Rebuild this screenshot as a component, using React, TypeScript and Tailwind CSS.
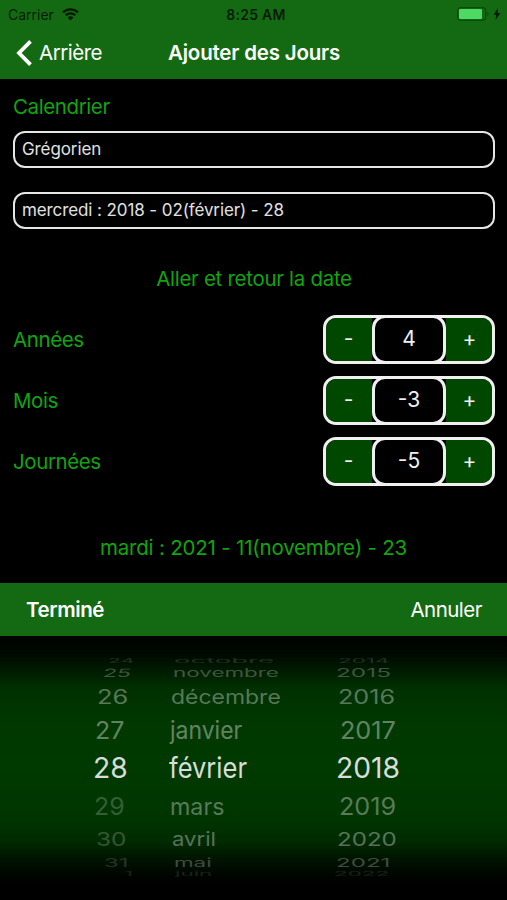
import { useState } from "react"
import clsx from "clsx"

const rows = [
  { h: "h-3", tone: "text-white/15", cells: [["24", "ml-[108px] scale-x-[.76] scale-y-[.22]"], ["octobre", "ml-[174px] scale-x-[.98] scale-y-[.22]"], ["2014", "ml-[338px] scale-x-[.8] scale-y-[.22]"]] },
  { h: "h-3", tone: "text-white/25", cells: [["25", "ml-[103px] scale-x-[.82] scale-y-[.41] -skew-x-6"], ["novembre", "ml-[173px] scale-x-[.8] scale-y-[.41]"], ["2015", "ml-[336px] scale-x-[.87] scale-y-[.41]"]] },
  { h: "h-9", tone: "text-white/35", cells: [["26", "ml-[97px] scale-x-[.91] scale-y-[.7]"], ["décembre", "ml-[171px] scale-x-[.82] scale-y-[.7]"], ["2016", "ml-[338px] scale-x-[.9] scale-y-[.7]"]] },
  { h: "h-[30px]", tone: "text-white/40", cells: [["27", "ml-[95px] scale-x-[.89] scale-y-[.87]"], ["janvier", "ml-[170px] scale-x-[.82] scale-y-[.87]"], ["2017", "ml-[340px] scale-x-[.9] scale-y-[.87]"]] },
  { h: "h-[46px]", tone: "text-[#d9ddd9]", cells: [["28", "ml-[93px] scale-x-[1.01]"], ["février", "ml-[169px] scale-x-[.91]"], ["2018", "ml-[336px] scale-x-[1.01]"]] },
  { h: "h-8", tone: "text-white/35", cells: [["29", "ml-[94px] scale-x-[.89] scale-y-[.85] opacity-60"], ["mars", "ml-[170px] scale-x-[.83] scale-y-[.85]"], ["2019", "ml-[339px] scale-x-[.9] scale-y-[.85]"]] },
  { h: "h-8", tone: "text-white/35", cells: [["30", "ml-[96px] scale-x-[.87] scale-y-[.68] opacity-60"], ["avril", "ml-[172px] scale-x-[.79] scale-y-[.68]"], ["2020", "ml-[337px] scale-x-[.86] scale-y-[.68]"]] },
  { h: "h-4", tone: "text-white/25", cells: [["31", "ml-[104px] scale-x-[.85] scale-y-[.44] opacity-60"], ["mai", "ml-[174px] scale-x-[.8] scale-y-[.44]"], ["2021", "ml-[336px] scale-x-[.86] scale-y-[.44]"]] },
  { h: "h-1.5", tone: "text-white/10", cells: [["1", "ml-[124px] scale-x-[.8] scale-y-[.2]"], ["juin", "ml-[175px] scale-x-[.8] scale-y-[.2]"], ["2022", "ml-[334px] scale-x-[.8] scale-y-[.2]"]] },
]

function Field({ children }: { children: string }) {
  return (
    <div className="-mr-px h-[37px] rounded-[12px] border-2 border-[#e6e6e6] px-[7px] text-[17px] leading-[33px] tracking-[-0.1px] text-[#e0e0e0]">
      {children}
    </div>
  )
}

function Stepper({ label, initial }: { label: string; initial: number }) {
  const [value, setValue] = useState(initial)

  return (
    <div className="-mr-px flex h-[49px] items-center justify-between">
      <span className="pt-0.5 text-[20.5px] tracking-[-0.4px] text-[#10a510]">{label}</span>
      <div className="flex h-[49px] w-[172px] overflow-hidden rounded-[13px] border-[3px] border-[#f0f0f0] text-[21px] text-[#f0f0f0]">
        <button className="w-[46px] bg-[#004800] pr-px pb-0.5" onClick={() => setValue(value - 1)}>-</button>
        <div className="-my-[3px] w-[74px] bg-black">
          <div className="h-full rounded-[13px] border-[3px] border-[#f0f0f0] text-center leading-[42px]">{value}</div>
        </div>
        <button className="w-[46px] bg-[#004800] pb-0.5 pl-px" onClick={() => setValue(value + 1)}>+</button>
      </div>
    </div>
  )
}

export default function App() {
  return (
    <div className="h-[900px] w-[507px] overflow-hidden bg-black font-['Inter',sans-serif]">
      {/* Header */}
      <header className="h-[79px] bg-[#146a12]">
        <div className="grid h-7 grid-cols-3 items-center pr-1.5 pl-2 text-[14px] text-black/75">
          <div className="flex items-center gap-2">
            <span>Carrier</span>
            <svg width="17" height="13" viewBox="0 0 17 13" fill="none" stroke="#021a02" strokeWidth="2.3">
              <path d="M1 4.4a10.7 10.7 0 0 1 15 0M3.7 7.3a6.8 6.8 0 0 1 9.6 0" />
              <path d="M8.5 12.5 5.6 9.6a4.1 4.1 0 0 1 5.8 0z" fill="#021a02" stroke="none" />
            </svg>
          </div>
          <span className="pl-[3px] text-center font-semibold tracking-[0.3px]">8:25 AM</span>
          <div className="flex items-center justify-end gap-1">
            <svg width="32" height="14" viewBox="0 0 32 14">
              <rect x="0.7" y="0.7" width="28" height="12.6" rx="3" fill="none" stroke="#0c4a0b" strokeWidth="1.2" />
              <rect x="2" y="2" width="23" height="10" rx="1.2" fill="#4cd964" />
              <path d="M30.3 5v4q1.4-.7 1.4-2t-1.4-2" fill="#0c4a0b" />
            </svg>
            <svg width="8" height="12" viewBox="0 0 8 12" fill="#021a02">
              <path d="M5 0 .6 6.7h2.7L2.5 12l4.9-7H4.6z" />
            </svg>
          </div>
        </div>
        <div className="grid h-[50px] grid-cols-[1fr_auto_1fr] items-center text-[20.5px] text-white">
          <button className="flex items-center gap-[7px] pl-4">
            <svg width="16" height="26" viewBox="0 0 16 26" fill="none" stroke="white" strokeWidth="3.8">
              <path d="M14.5 1.4 3 13l11.5 11.6" />
            </svg>
            <span className="tracking-[-0.5px]">Arrière</span>
          </button>
          <h1 className="pl-px font-semibold tracking-[-0.2px]">Ajouter des Jours</h1>
        </div>
      </header>

      {/* Form */}
      <main className="h-[504px] px-[13px] pt-3">
        <div className="h-[40px] text-[20.5px] leading-[31px] tracking-[-0.4px] text-[#10a510]">Calendrier</div>
        <Field>Grégorien</Field>
        <div className="h-6" />
        <Field>mercredi : 2018 - 02(février) - 28</Field>
        <div className="mt-[34px] mb-[21px] pl-px text-center text-[20.5px] leading-[31px] tracking-[-0.3px] text-[#10a510]">
          Aller et retour la date
        </div>
        <div className="flex flex-col gap-3">
          <Stepper label="Années" initial={4} />
          <Stepper label="Mois" initial={-3} />
          <Stepper label="Journées" initial={-5} />
        </div>
        <div className="mt-[46px] text-center text-[20.5px] leading-[31px] tracking-[-0.2px] text-[#10a510]">
          mardi : 2021 - 11(novembre) - 23
        </div>
      </main>

      {/* Toolbar */}
      <div className="flex h-[53px] items-center justify-between bg-[#146a12] pt-px pr-[25px] pl-[26px] text-[20.5px] text-white">
        <button className="font-semibold tracking-[-0.4px]">Terminé</button>
        <button className="tracking-[-0.5px]">Annuler</button>
      </div>

      {/* Date wheel */}
      <div className="h-[264px] bg-[linear-gradient(to_bottom,#000_0,#000900_18px,#001800_32px,#003000_52px,#003800_90px,#003a00_130px,#003500_180px,#002b00_205px,#001500_222px,#000600_238px,#000_250px)] pt-[19px]">
        {rows.map((row) => (
          <div key={row.cells[0][0]} className={clsx("grid grid-rows-[100%] text-[28px] leading-none", row.h, row.tone)}>
            {row.cells.map(([text, style]) => (
              <span key={text} className={clsx("col-start-1 row-start-1 origin-left self-center justify-self-start whitespace-nowrap", style)}>
                {text}
              </span>
            ))}
          </div>
        ))}
      </div>
    </div>
  )
}
